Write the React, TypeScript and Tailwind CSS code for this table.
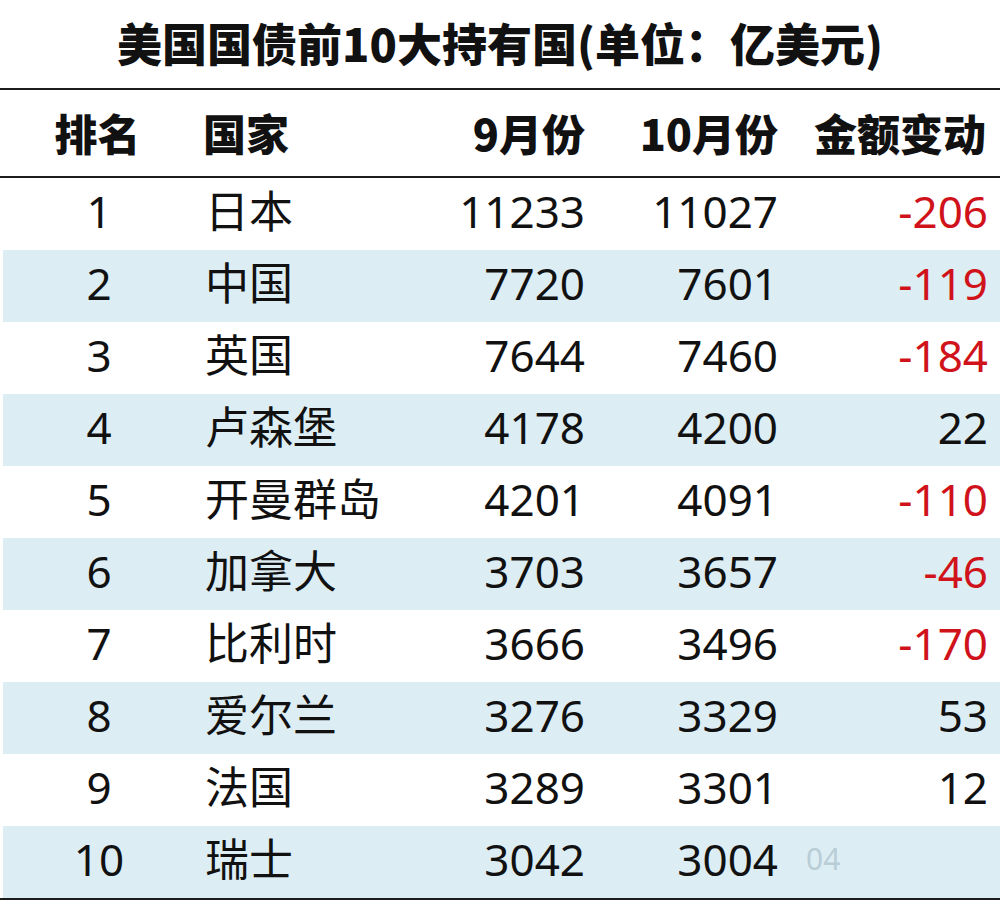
const rows = [
  { rank: 1, name: "日本", sep: 11233, oct: 11027, diff: -206 },
  { rank: 2, name: "中国", sep: 7720, oct: 7601, diff: -119 },
  { rank: 3, name: "英国", sep: 7644, oct: 7460, diff: -184 },
  { rank: 4, name: "卢森堡", sep: 4178, oct: 4200, diff: 22 },
  { rank: 5, name: "开曼群岛", sep: 4201, oct: 4091, diff: -110 },
  { rank: 6, name: "加拿大", sep: 3703, oct: 3657, diff: -46 },
  { rank: 7, name: "比利时", sep: 3666, oct: 3496, diff: -170 },
  { rank: 8, name: "爱尔兰", sep: 3276, oct: 3329, diff: 53 },
  { rank: 9, name: "法国", sep: 3289, oct: 3301, diff: 12 },
  { rank: 10, name: "瑞士", sep: 3042, oct: 3004, diff: null },
];

const font = "font-['Noto_Sans','Noto_Sans_CJK_SC',sans-serif]";
const boldFont = "font-['Noto_Sans_CJK_SC','Noto_Sans',sans-serif] font-extrabold";

export default function App() {
  return (
    <div className={`w-[1000px] h-[904px] bg-white text-[#111] ${font}`}>
      <div className={`h-[88px] flex items-center justify-center pb-[4px] text-[45px] leading-none ${boldFont}`}>
        美国国债前10大持有国(单位：亿美元)
      </div>

      <div className="border-t-2 border-b-2 border-[#1c1c1c] h-[90px] flex items-center pb-[2px] text-[43px] leading-none">
        <div className={`w-[195px] text-center ${boldFont}`}>排名</div>
        <div className={`w-[230px] pl-[8px] ${boldFont}`}>国家</div>
        <div className={`w-[160px] text-right ${boldFont}`}>9月份</div>
        <div className={`w-[193px] text-right ${boldFont}`}>10月份</div>
        <div className={`flex-1 pr-[14px] text-right ${boldFont}`}>金额变动</div>
      </div>

      <div className="border-b-2 border-[#1c1c1c]">
        {rows.map((r, i) => (
          <div
            key={r.rank}
            className={`h-[72px] flex items-center pb-[6px] text-[44px] leading-none ml-[3px] ${
              i % 2 === 1 ? "bg-[#ddedf4]" : "bg-white"
            }`}
          >
            <div className="w-[192px] text-center">{r.rank}</div>
            <div className="w-[230px] pl-[10px]">{r.name}</div>
            <div className="w-[160px] text-right">{r.sep}</div>
            <div className="w-[193px] text-right">{r.oct}</div>
            <div
              className={`flex-1 pr-[12px] text-right ${
                r.diff !== null && r.diff < 0 ? "text-[#d0121b]" : ""
              }`}
            >
              {r.diff === null ? (
                <span className="block text-left pl-[28px] text-[30px] text-[#b9cdd6]">04</span>
              ) : (
                r.diff
              )}
            </div>
          </div>
        ))}
      </div>
    </div>
  );
}
